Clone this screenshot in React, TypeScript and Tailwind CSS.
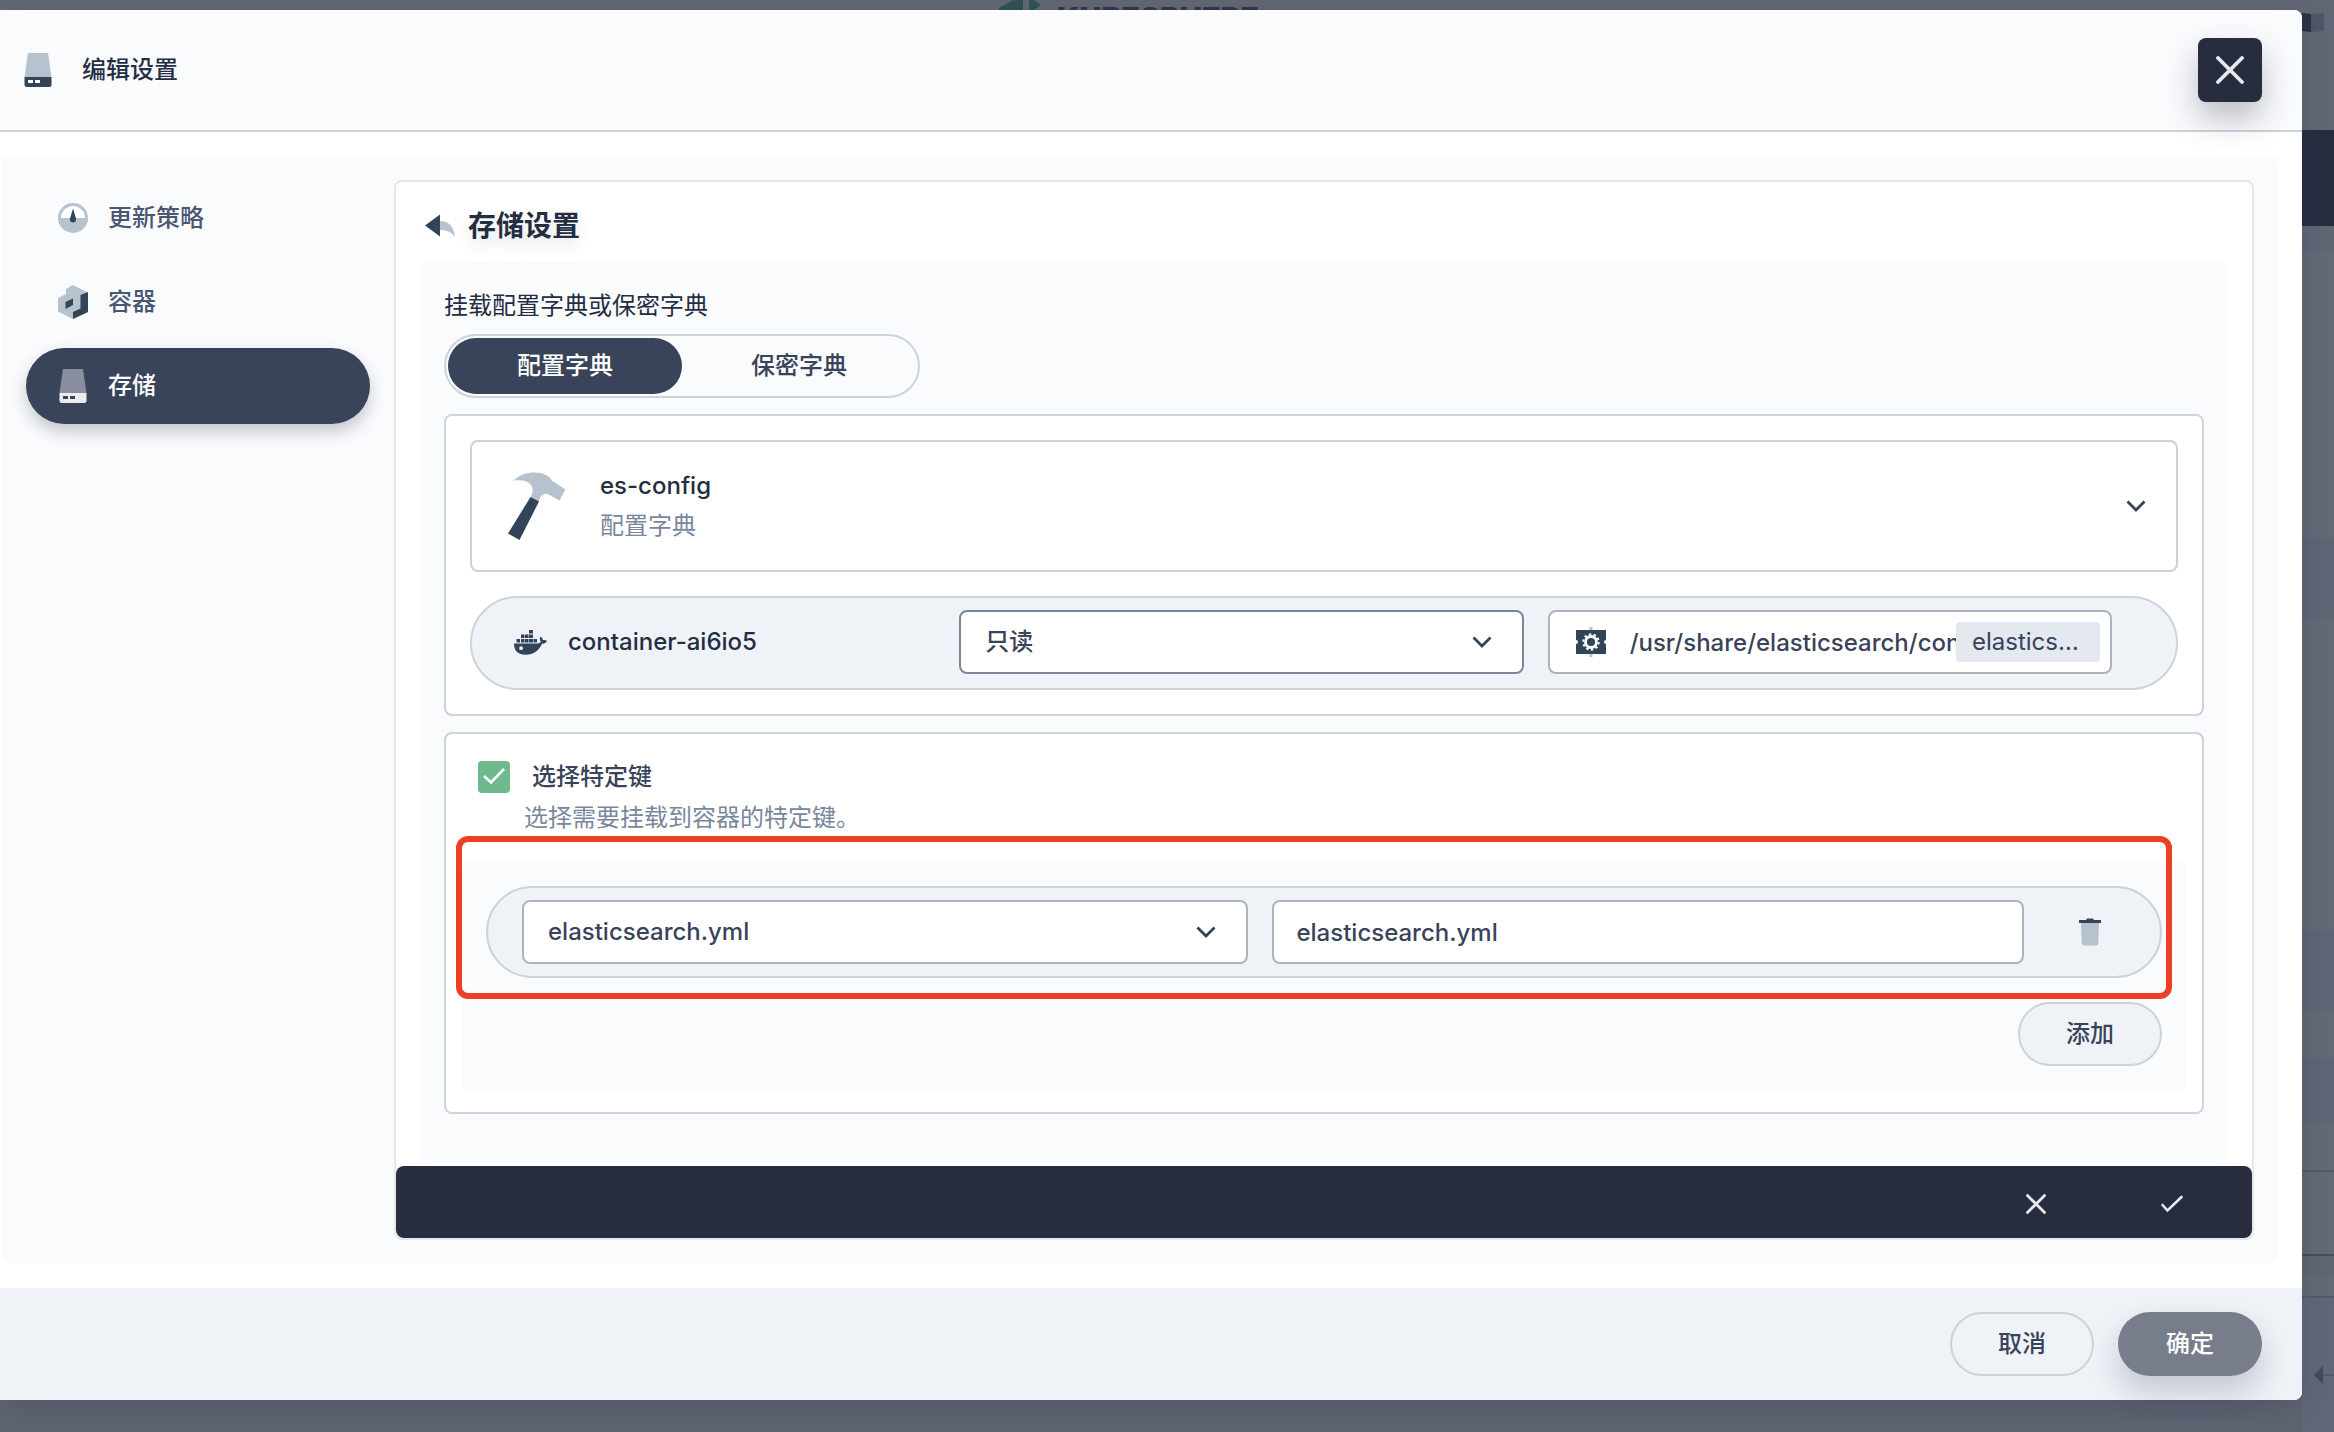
import React, { useState } from "react";

const FONT = "font-['Inter','Noto_Sans_CJK_SC',sans-serif]";

function Chevron({ className = "" }: { className?: string }) {
  return (
    <svg viewBox="0 0 20 12" className={`h-3 w-5 ${className}`} fill="none" stroke="#324558" strokeWidth="2.8" aria-hidden="true">
      <path d="M1.5 1.5 10 10l8.500-8.500" />
    </svg>
  );
}

function DiskIcon({ top, base, light }: { top: string; base: string; light: string }) {
  return (
    <svg viewBox="0 0 28 34" className="h-[34px] w-7 shrink-0" aria-hidden="true">
      <path d="M4 0h20l3.500 24H.5z" fill={top} />
      <path d="M.5 24h27v7.500a2.500 2.500 0 0 1-2.500 2.500H3a2.500 2.500 0 0 1-2.500-2.500z" fill={base} />
      <path d="M4 27h5v3H4zm7 0h5v3h-5z" fill={light} />
    </svg>
  );
}

function GaugeIcon() {
  return (
    <svg viewBox="0 0 30 30" className="h-[30px] w-[30px] shrink-0" aria-hidden="true">
      <circle cx="15" cy="15" r="15" fill="#b6c2cd" />
      <path d="M3 15a12 12 0 0 1 24 0z" fill="#fff" />
      <path d="M15 5.500 18 15.500q.5 4-3 4t-3-4z" fill="#324558" />
    </svg>
  );
}

function ContainerIcon() {
  return (
    <svg viewBox="0 0 30 34" className="h-[34px] w-[30px] shrink-0" aria-hidden="true">
      <path d="M15 0 30 7.500V27L15 34 0 26.500V13l8-4V4z" fill="#b6c2cd" />
      <path d="M30 7v20L15 34v-7l7.500-3.500V10z" fill="#324558" />
      <path d="M7.500 17 15 13.500v6.500L7.500 24z" fill="#324558" />
    </svg>
  );
}

function BackIcon() {
  return (
    <svg viewBox="0 0 30 24" className="h-6 w-[30px]" aria-hidden="true">
      <path d="M15 7c9 0 14.500 6 15 16.500C27 18 22 16 15 16z" fill="#b6c2cd" />
      <path d="M0 11.500 15 .5v22z" fill="#324558" />
    </svg>
  );
}

function HammerIcon() {
  return (
    <svg viewBox="0 0 58 68" className="h-[68px] w-[58px] shrink-0" aria-hidden="true">
      <path d="M5.500 8.500C12 2.500 19 .5 27 .5c8 0 14 3 17.500 8.500L57.500 17.500 51.500 28.500 40 22q-5-1-8 4l-1.500 4-7.500-4.500 1.500-6C26 13 20 6.500 5.500 8.500z" fill="#b6c2cd" />
      <path d="M22.500 25 31 29.500 11.500 68 0 61.500z" fill="#324558" />
    </svg>
  );
}

function DockerIcon() {
  return (
    <svg viewBox="0 0 34 25" className="h-[25px] w-[34px] shrink-0" fill="#324558" aria-hidden="true">
      <path d="M15 0h4v3.500h-4zM7 4.500h3.500V8H7zM11 4.500h3.500V8H11zM15 4.500h4V8h-4zM2.500 9H6v3.500H2.500zM7 9h3.500v3.500H7zM11 9h3.500v3.500H11zM15 9h4v3.500h-4zM19.500 9h3.500v3.500h-3.500z" />
      <path
        fillRule="evenodd"
        d="M0 13.500h23.500c1.500 0 3-.8 3.300-2-1.500-1.500-1.300-3.500 0-5 1.300 1 2 2.300 2 3.500 1.500-.2 3.200.2 4.200 1-1 2-3 2.800-5 2.800C25 20.500 19.500 24.800 12 24.800 3.500 24.800 0 20.500 0 13.500zm5.200 4.700a1.900 1.900 0 1 0 3.800 0 1.900 1.900 0 0 0-3.800 0z"
      />
    </svg>
  );
}

function GearIcon() {
  return (
    <svg viewBox="0 0 30 30" className="h-[30px] w-[30px] shrink-0" aria-hidden="true">
      <path d="M13.500 0h3v30h-3z" fill="#b6c2cd" />
      <path d="M0 3h30v10a2 2 0 0 0 0 4v10H0V17a2 2 0 0 0 0-4z" fill="#324558" />
      <circle cx="15" cy="15" r="5.500" fill="none" stroke="#fff" strokeWidth="2.800" />
      <circle cx="15" cy="15" r="7.700" fill="none" stroke="#fff" strokeWidth="2" strokeDasharray="2.420 2.420" />
    </svg>
  );
}

function TrashIcon() {
  return (
    <svg viewBox="0 0 22 28" className="h-7 w-[22px]" aria-hidden="true">
      <path d="M2 5h18l-.8 20.500a2 2 0 0 1-2 2H4.800a2 2 0 0 1-2-2z" fill="#b6c2cd" />
      <path d="M0 2h7l1-1.500h6L15 2h7v3H0z" fill="#324558" />
    </svg>
  );
}

function Cross({ className }: { className: string }) {
  return (
    <svg viewBox="0 0 28 28" className={className} fill="none" stroke="#e8eaec" strokeWidth="3.800" strokeLinecap="round" aria-hidden="true">
      <path d="m2 2 24 24M26 2 2 26" />
    </svg>
  );
}

const strip = [
  ["h-[130px]", "bg-[#636876]"],
  ["h-24", "bg-[#272d3f]"],
  ["h-6", "bg-[#626776]"],
  ["h-72", "bg-[#656a77]"],
  ["h-20", "bg-[#606676]"],
  ["h-[312px]", "bg-[#656a77]"],
  ["h-20", "bg-[#606676]"],
  ["h-12", "bg-[#656a77]"],
  ["h-16", "bg-[#606676]"],
  ["h-12", "bg-[#656a77]"],
  ["h-0.5", "bg-[#555b6a]"],
  ["h-[82px]", "bg-[#656a77]"],
  ["h-0.5", "bg-[#3a5656]"],
  ["h-5", "bg-[#606873]"],
  ["h-5", "bg-[#656a77]"],
  ["h-0.5", "bg-[#555b6a]"],
  ["h-[68px]", "bg-[#626877]"],
];

function PageBehind() {
  return (
    <div className="absolute inset-0 flex justify-end overflow-hidden bg-[#606573]" aria-hidden="true">
      <div className="flex h-2.5 flex-1 justify-center gap-2 overflow-hidden bg-[#636876] pr-11">
        <svg viewBox="0 0 50 10" className="h-2.5 w-[50px]" fill="#2f5450">
          <path d="M0 10V8L14 0h10v10zM30 0h5l7 5-7 5h-5z" />
        </svg>
        <span className="text-[30px] leading-9 font-black text-[#33364a]">KUBESPHERE</span>
      </div>
      <div className="relative w-8 bg-[#626877]">
        {strip.map(([h, c], i) => (
          <div key={i} className={`${h} ${c}`} />
        ))}
        <svg viewBox="0 0 20 18" className="ml-3 h-[18px] w-5" aria-hidden="true">
          <path d="M9 8h11v2H9z" fill="#555b6c" />
          <path d="M0 9 9 0v18z" fill="#43495c" />
        </svg>
        <svg viewBox="0 0 22 20" className="absolute top-[13px] left-0 h-5 w-[22px]">
          <path d="M0 0l9 1v18l-9-1z" fill="#2c3448" />
          <path d="M9 1l13-1v18L9 19z" fill="#505767" />
        </svg>
      </div>
    </div>
  );
}

const nav = [
  { label: "更新策略", icon: <GaugeIcon /> },
  { label: "容器", icon: <ContainerIcon /> },
  { label: "存储", icon: <DiskIcon top="#888e9c" base="#ececef" light="#39435a" />, active: true },
];

const field = "h-16 w-full rounded-lg border-2 bg-white text-2xl font-medium text-[#39435a]";

function Select({ label, value, border }: { label: string; value: string; border: string }) {
  return (
    <div className="relative min-w-0">
      <select aria-label={label} defaultValue={value} className={`${field} ${border} appearance-none pr-16 pl-6`}>
        <option>{value}</option>
      </select>
      <Chevron className="pointer-events-none absolute top-[26px] right-8" />
    </div>
  );
}

export default function App() {
  const [checked, setChecked] = useState(true);
  const [path, setPath] = useState("/usr/share/elasticsearch/config");
  const [name, setName] = useState("elasticsearch.yml");

  return (
    <div className={`relative min-h-screen overflow-hidden pt-2.5 pr-8 pb-8 ${FONT} text-2xl text-[#242e42]`}>
      <PageBehind />
      <div role="dialog" aria-labelledby="dialog-title" className="relative rounded-r-lg bg-white shadow-[0_8px_32px_rgba(36,46,66,0.25)]">
        <header className="flex h-[122px] items-center rounded-tr-lg border-b-2 border-[#ccd3db] bg-[#fafbfd] pr-10 pl-6">
          <DiskIcon top="#b6c2cd" base="#324558" light="#fff" />
          <h1 id="dialog-title" className="ml-[30px] flex-1 leading-9 font-medium">编辑设置</h1>
          <button aria-label="关闭" className="flex h-16 w-16 items-center justify-center rounded-lg bg-[#272d3f] shadow-[0_16px_32px_rgba(36,46,66,0.3)]">
            <Cross className="h-7 w-7" />
          </button>
        </header>

        <div className="py-6 pr-6 pl-0.5">
          <div className="flex gap-6 rounded-lg bg-[#fafbfd] p-6">
            <nav className="flex w-[344px] shrink-0 flex-col gap-2">
              {nav.map((n) => (
                <button
                  key={n.label}
                  aria-current={n.active ? "page" : undefined}
                  className={
                    n.active
                      ? "flex h-[76px] items-center gap-5 rounded-full bg-[#39435a] pl-8 font-medium text-white shadow-[0_8px_16px_rgba(36,46,66,0.25)]"
                      : "flex h-[76px] items-center gap-5 rounded-full pl-8 font-medium text-[#4a5672]"
                  }
                >
                  <span className="flex w-[30px] justify-center">{n.icon}</span>
                  {n.label}
                </button>
              ))}
            </nav>

            <section className="min-w-0 flex-1 rounded-lg border-2 border-[#e3e8ee] bg-white">
              <div className="flex h-20 items-center px-6 pt-2">
                <button aria-label="返回" className="flex w-10 justify-center">
                  <BackIcon />
                </button>
                <h2 className="ml-2 text-[28px] leading-10 font-bold [text-shadow:0_8px_16px_rgba(36,46,66,0.12)]">存储设置</h2>
              </div>

              <div className="mx-6 mb-1 rounded-lg bg-[#fafbfd] px-6 pt-6 pb-12">
                <p className="mb-2 leading-10">挂载配置字典或保密字典</p>
                <div role="tablist" className="mb-4 flex h-16 w-fit rounded-full border-2 border-[#ccd3db] p-0.5">
                  <button role="tab" aria-selected="true" className="w-[234px] rounded-full bg-[#39435a] font-medium text-white">配置字典</button>
                  <button role="tab" aria-selected="false" className="w-[234px] rounded-full font-medium text-[#39435a]">保密字典</button>
                </div>

                <div className="mb-4 rounded-lg border-2 border-[#ccd3db] bg-white p-6">
                  <button aria-haspopup="listbox" className="flex h-[132px] w-full items-center rounded-lg border-2 border-[#ccd0dc] pr-[30px] pl-9 text-left">
                    <HammerIcon />
                    <span className="ml-[34px] flex-1">
                      <span className="block leading-10 font-medium">es-config</span>
                      <span className="block leading-10 text-[#79879c]">配置字典</span>
                    </span>
                    <Chevron />
                  </button>
                  <div className="mt-6 grid grid-cols-[minmax(0,3fr)_minmax(0,4fr)_minmax(0,4fr)] items-center gap-6 rounded-[47px] border-2 border-[#ccd3db] bg-[#eff2f7] pt-3 pr-16 pb-3.5 pl-10">
                    <div className="flex items-center gap-5 pl-0.5">
                      <DockerIcon />
                      <span className="leading-9 font-medium">container-ai6io5</span>
                    </div>
                    <Select label="访问模式" value="只读" border="border-[#79879c]" />
                    <div className="flex h-16 min-w-0 items-center rounded-lg border-2 border-[#abb4be] bg-white pr-2.5 pl-[26px]">
                      <GearIcon />
                      <input
                        aria-label="挂载路径"
                        value={path}
                        onChange={(e) => setPath(e.target.value)}
                        className="ml-6 h-full min-w-0 flex-1 bg-transparent font-medium text-[#39435a] outline-none"
                      />
                      <span className="w-36 shrink-0 truncate rounded bg-[#e3e9ef] px-4 leading-10 text-[#36435c]">elasticsearch.yml</span>
                    </div>
                  </div>
                </div>

                <div className="relative rounded-lg border-2 border-[#ccd3db] bg-white px-4 pt-[27px] pb-[22px]">
                  <label className="ml-4 flex h-8 w-fit items-center">
                    <span className="relative h-8 w-8">
                      <input
                        type="checkbox"
                        checked={checked}
                        onChange={(e) => setChecked(e.target.checked)}
                        className="block h-8 w-8 appearance-none rounded bg-[#d5dbe3] checked:bg-[#70b98d]"
                      />
                      {checked && (
                        <svg viewBox="0 0 32 32" className="pointer-events-none absolute inset-0 h-8 w-8" fill="none" stroke="#fff" strokeWidth="2.600" aria-hidden="true">
                          <path d="m6 15 7 6.500L26 8" />
                        </svg>
                      )}
                    </span>
                    <span className="ml-[22px] font-medium text-[#39435a]">选择特定键</span>
                  </label>
                  <p className="mt-2 ml-[62px] leading-[34px] text-[#79879c]">选择需要挂载到容器的特定键。</p>

                  <div className="mt-[27px] rounded-lg bg-[#fafbfd] p-6">
                    <div className="flex items-center rounded-full border-2 border-[#ccd3db] bg-[#eff2f7] py-3 pr-[38px] pl-[34px]">
                      <div className="grid flex-1 grid-cols-[29fr_30fr] gap-6">
                        <Select label="键" value="elasticsearch.yml" border="border-[#abb4be]" />
                        <input
                          aria-label="文件名"
                          value={name}
                          onChange={(e) => setName(e.target.value)}
                          className={`${field} border-[#abb4be] px-[22px]`}
                        />
                      </div>
                      <button aria-label="删除" className="ml-[34px] flex h-16 w-16 items-center justify-center">
                        <TrashIcon />
                      </button>
                    </div>
                    <div className="mt-6 flex justify-end">
                      <button className="h-16 w-36 rounded-full border-2 border-[#ccd3db] bg-[#eff2f7] font-medium text-[#39435a]">添加</button>
                    </div>
                  </div>

                  <div className="pointer-events-none absolute top-[102px] right-[30px] left-2.5 h-[163px] rounded-xl border-[6px] border-[#ec3f26]" />
                </div>
              </div>

              <div className="flex h-[72px] items-center justify-end rounded-lg bg-[#272d3f] pt-1 pr-3">
                <button aria-label="放弃" className="flex h-full w-[136px] items-center justify-center">
                  <Cross className="h-5 w-5" />
                </button>
                <button aria-label="应用" className="flex h-full w-[136px] items-center justify-center">
                  <svg viewBox="0 0 24 18" className="h-[18px] w-6" fill="none" stroke="#e8eaec" strokeWidth="2.600" strokeLinecap="round" aria-hidden="true">
                    <path d="m2.500 10 5 5.500L21.500 2" />
                  </svg>
                </button>
              </div>
            </section>
          </div>
        </div>

        <footer className="flex h-28 items-center justify-end gap-6 rounded-br-lg bg-[#eff2f7] pr-10">
          <button className="h-16 w-36 rounded-full border-2 border-[#ccd3db] font-medium text-[#39435a]">取消</button>
          <button className="h-16 w-36 rounded-full bg-[#787d8b] font-medium text-white shadow-[0_16px_32px_rgba(36,46,66,0.22)]">确定</button>
        </footer>
      </div>
    </div>
  );
}
